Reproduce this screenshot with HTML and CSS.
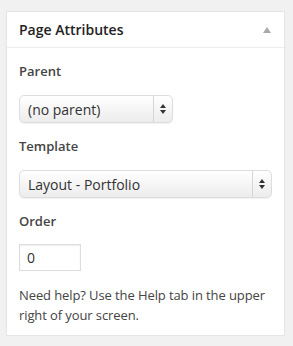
FILE: index.html
```html
<!DOCTYPE html>
<html lang="en">
<head>
  <meta charset="UTF-8">
  <title>Page Attributes</title>
  <link rel="stylesheet" href="styles.css">
</head>
<body>
  <div class="postbox">
    <div class="postbox-head">
      <h3>Page Attributes</h3>
      <span class="toggle"></span>
    </div>
    <div class="inside">
      <p class="label">Parent</p>
      <div class="select select-short">
        <span class="select-value">(no parent)</span>
        <span class="select-arrows"><i class="up"></i><i class="down"></i></span>
      </div>

      <p class="label">Template</p>
      <div class="select select-wide">
        <span class="select-value">Layout - Portfolio</span>
        <span class="select-arrows"><i class="up"></i><i class="down"></i></span>
      </div>

      <p class="label">Order</p>
      <div class="order-input">0</div>

      <p class="help">Need help? Use the Help tab in the upper right of your screen.</p>
    </div>
  </div>
</body>
</html>
```

FILE: styles.css
```css
body {
  margin: 0;
  padding: 11px 0 0 6px;
  background-color: #f1f1f1;
  font-family: 'Open Sans', sans-serif;
  color: #444;
}

.postbox {
  width: 277px;
  height: 323px;
  background-color: #fff;
  border: 1px solid #e5e5e5;
  box-shadow: 0 1px 1px rgba(0,0,0,0.04);
}

.postbox-head {
  display: flex;
  align-items: center;
  justify-content: space-between;
  height: 35px;
  padding: 0 13px 0 12px;
  border-bottom: 1px solid #eee;
}

.postbox-head h3 {
  margin: 0;
  font-size: 14px;
  font-weight: 600;
  color: #222;
}

.toggle {
  width: 0;
  height: 0;
  border-left: 4px solid transparent;
  border-right: 4px solid transparent;
  border-bottom: 6px solid #aaa;
}

.inside {
  padding: 0 12px;
}

.label {
  margin: 14px 0 0;
  font-size: 13px;
  font-weight: 600;
  line-height: 18px;
  color: #444;
}

.select {
  box-sizing: border-box;
  display: flex;
  align-items: center;
  height: 28px;
  margin-top: 15px;
  border: 1px solid #ddd;
  border-radius: 5px;
  background: linear-gradient(#fff, #ececec);
  box-shadow: 0 1px 1px rgba(0,0,0,0.06);
  font-size: 14px;
  color: #333;
}

.select-short {
  width: 154px;
}

.select-wide {
  width: 253px;
}

.select-value {
  flex: 1;
  padding-left: 8px;
}

.select-arrows {
  display: flex;
  flex-direction: column;
  align-items: center;
  justify-content: center;
  gap: 2px;
  width: 18px;
  height: 100%;
  border-left: 1px solid #d5d5d5;
}

.select-arrows i {
  width: 0;
  height: 0;
  border-left: 3px solid transparent;
  border-right: 3px solid transparent;
}

.select-arrows .up {
  border-bottom: 4px solid #333;
}

.select-arrows .down {
  border-top: 4px solid #333;
}

.order-input {
  box-sizing: border-box;
  width: 62px;
  height: 27px;
  margin-top: 14px;
  padding: 3px 7px;
  border: 1px solid #ddd;
  box-shadow: inset 0 1px 2px rgba(0,0,0,0.07);
  font-size: 14px;
  color: #333;
}

.help {
  margin: 14px 0 0;
  font-size: 13px;
  line-height: 20px;
  letter-spacing: -0.1px;
  color: #444;
}
```
